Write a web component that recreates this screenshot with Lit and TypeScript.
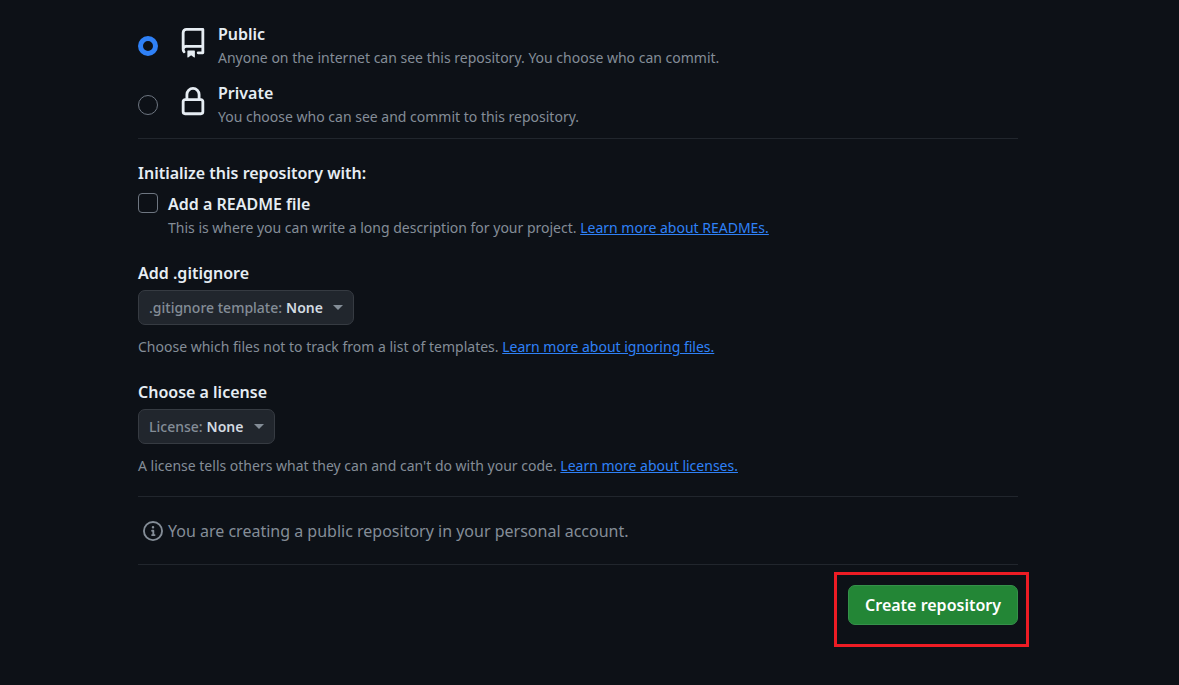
import { LitElement, html, css, svg } from "lit";
import { customElement, property, state } from "lit/decorators.js";

const repoIcon = svg`<path d="M2 2.5A2.5 2.5 0 0 1 4.5 0h8.75a.75.75 0 0 1 .75.75v12.5a.75.75 0 0 1-.75.75h-2.5a.75.75 0 0 1 0-1.5h1.75v-2h-8a1 1 0 0 0-.714 1.7.75.75 0 1 1-1.072 1.05A2.495 2.495 0 0 1 2 11.5Zm10.5-1h-8a1 1 0 0 0-1 1v6.708A2.486 2.486 0 0 1 4.5 9h8ZM5 12.25a.25.25 0 0 1 .25-.25h3.5a.25.25 0 0 1 .25.25v3.25a.25.25 0 0 1-.4.2l-1.45-1.087a.249.249 0 0 0-.3 0L5.4 15.7a.25.25 0 0 1-.4-.2Z"/>`;

const lockIcon = svg`<path d="M4 4a4 4 0 0 1 8 0v2h.25c.966 0 1.75.784 1.75 1.75v5.5A1.75 1.75 0 0 1 12.25 15h-8.5A1.75 1.75 0 0 1 2 13.25v-5.5C2 6.784 2.784 6 3.75 6H4Zm8.25 3.5h-8.5a.25.25 0 0 0-.25.25v5.5c0 .138.112.25.25.25h8.5a.25.25 0 0 0 .25-.25v-5.5a.25.25 0 0 0-.25-.25ZM10.5 6V4a2.5 2.5 0 1 0-5 0v2Z"/>`;

const visibilities = [
  {
    id: "public",
    name: "Public",
    note: "Anyone on the internet can see this repository. You choose who can commit.",
    icon: repoIcon,
  },
  {
    id: "private",
    name: "Private",
    note: "You choose who can see and commit to this repository.",
    icon: lockIcon,
  },
];

/* A labelled drop-down drawn as a single rounded button. */
@customElement("template-picker")
export class TemplatePicker extends LitElement {
  @property() label = "";

  static styles = css`
    :host {
      display: flex;
    }
    .box {
      display: flex;
      align-items: center;
      gap: 4px;
      height: 35px;
      box-sizing: border-box;
      padding: 0 10px;
      border: 1px solid #363b42;
      border-radius: 7px;
      background: #21262d;
      color: #848d97;
      font-size: 14px;
      font-weight: 500;
      line-height: 22px;
    }
    .value {
      appearance: none;
      margin: 0;
      padding: 0;
      border: 0;
      background: none;
      color: #d3dae1;
      font: inherit;
      font-weight: 600;
    }
    .caret {
      width: 10px;
      height: 5px;
      margin-left: 6px;
      fill: #848d97;
    }
  `;

  render() {
    return html`<div class="box">
      <label for="value">${this.label}</label>
      <select class="value" id="value">
        <option>None</option>
      </select>
      <svg class="caret" viewBox="0 0 10 5" aria-hidden="true"><path d="M0 0h10L5 5z" /></svg>
    </div>`;
  }
}

@customElement("app-root")
export class AppRoot extends LitElement {
  @state() private visibility = "public";

  static styles = css`
    :host {
      display: block;
      min-height: 100vh;
      box-sizing: border-box;
      padding: 21px 161px 38px 138px;
      background: #0d1117;
      color: #e6edf3;
      font-family: "Segoe UI", "Noto Sans", sans-serif;
      font-size: 16px;
      line-height: 26px;
    }
    .choices {
      display: grid;
      gap: 11px;
      padding-bottom: 10px;
      border-bottom: 1px solid #21262d;
    }
    .choice {
      display: flex;
      align-items: flex-start;
    }
    .radio,
    .check {
      appearance: none;
      flex: none;
      box-sizing: border-box;
      width: 20px;
      height: 20px;
      border: 1px solid #6e7681;
      background: transparent;
    }
    .radio {
      margin: 15px 20px 0 0;
      border-radius: 50%;
    }
    .radio:checked {
      border: 5px solid #2f81f7;
    }
    .check {
      margin: 2px 10px 0 0;
      border-radius: 4px;
    }
    .check:checked {
      border-color: #2f81f7;
      background: #2f81f7;
    }
    .kind {
      flex: none;
      width: 30px;
      height: 30px;
      margin: 7px 10px 0 0;
      fill: #e6edf3;
    }
    .title {
      display: block;
      margin: 0;
      font-size: 16px;
      font-weight: 600;
      line-height: 26px;
    }
    .note {
      display: block;
      margin: 0;
      color: #848d97;
      font-size: 14px;
      line-height: 22px;
    }
    .link {
      color: #2f81f7;
      text-decoration: underline;
    }
    .init {
      padding-top: 21px;
    }
    .readme {
      display: flex;
      align-items: flex-start;
      margin-top: 5px;
    }
    .field {
      display: grid;
      padding-top: 21px;
    }
    .picker {
      margin: 4px 0 11px;
    }
    .summary {
      display: flex;
      align-items: center;
      gap: 5px;
      margin: 19px 0 20px;
      padding: 21px 5px 20px;
      border: solid #21262d;
      border-width: 1px 0;
      color: #848d97;
    }
    .info {
      flex: none;
      width: 20px;
      height: 20px;
      fill: #848d97;
    }
    .actions {
      display: flex;
      justify-content: flex-end;
    }
    .target {
      position: relative;
    }
    .target::after {
      content: "";
      position: absolute;
      inset: -13px -11px -22px -14px;
      border: 3px solid #ed1c24;
      pointer-events: none;
    }
    .create {
      display: block;
      height: 40px;
      padding: 0 16px;
      border: 1px solid #35914a;
      border-radius: 7px;
      background: #238636;
      color: #fff;
      font: inherit;
      font-weight: 600;
    }
  `;

  render() {
    return html`
      <form @submit=${(e: Event) => e.preventDefault()}>
        <div class="choices" role="radiogroup" aria-label="Visibility">
          ${visibilities.map(
            (v) => html`<div class="choice">
              <input
                class="radio"
                type="radio"
                name="visibility"
                id=${v.id}
                .checked=${this.visibility === v.id}
                @change=${() => (this.visibility = v.id)}
              />
              <svg class="kind" viewBox="0 0 16 16" aria-hidden="true">${v.icon}</svg>
              <label for=${v.id}>
                <span class="title">${v.name}</span>
                <span class="note">${v.note}</span>
              </label>
            </div>`
          )}
        </div>

        <section class="init">
          <h3 class="title">Initialize this repository with:</h3>
          <div class="readme">
            <input class="check" type="checkbox" id="readme" />
            <div>
              <label class="title" for="readme">Add a README file</label>
              <p class="note">
                This is where you can write a long description for your project.
                <a class="link" href="#readmes">Learn more about READMEs.</a>
              </p>
            </div>
          </div>
        </section>

        <section class="field">
          <h3 class="title">Add .gitignore</h3>
          <template-picker class="picker" label=".gitignore template:"></template-picker>
          <p class="note">
            Choose which files not to track from a list of templates.
            <a class="link" href="#ignoring-files">Learn more about ignoring files.</a>
          </p>
        </section>

        <section class="field">
          <h3 class="title">Choose a license</h3>
          <template-picker class="picker" label="License:"></template-picker>
          <p class="note">
            A license tells others what they can and can't do with your code.
            <a class="link" href="#licenses">Learn more about licenses.</a>
          </p>
        </section>

        <div class="summary">
          <svg class="info" viewBox="0 0 16 16" aria-hidden="true">
            <path d="M0 8a8 8 0 1 1 16 0A8 8 0 0 1 0 8Zm8-6.5a6.5 6.5 0 1 0 0 13 6.5 6.5 0 0 0 0-13ZM6.5 7.75A.75.75 0 0 1 7.25 7h1a.75.75 0 0 1 .75.75v2.75h.25a.75.75 0 0 1 0 1.5h-2a.75.75 0 0 1 0-1.5h.25v-2h-.25a.75.75 0 0 1-.75-.75ZM8 6a1 1 0 1 1 0-2 1 1 0 0 1 0 2Z" />
          </svg>
          <span>You are creating a ${this.visibility} repository in your personal account.</span>
        </div>

        <div class="actions">
          <div class="target">
            <button class="create" type="submit">Create repository</button>
          </div>
        </div>
      </form>
    `;
  }
}
